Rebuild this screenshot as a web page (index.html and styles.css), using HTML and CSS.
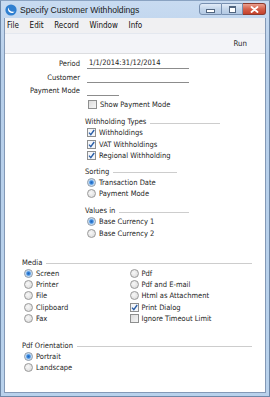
FILE: index.html
```html
<!DOCTYPE html>
<html lang="en">
<head>
  <meta charset="UTF-8">
  <title>Specify Customer Withholdings</title>
  <link rel="stylesheet" href="styles.css">
</head>
<body>
  <div class="window">
    <div class="titlebar">
      <svg class="app-icon" width="12" height="12" viewBox="0 0 12 12">
        <circle cx="6" cy="6" r="5.6" fill="#2f7fd0"/>
        <path d="M3.2 3.4 C2.4 5.6 3.6 8.6 6.6 8.9 C8.2 9 9.2 8.2 9.6 7.4 C8.4 8 6.2 7.9 5 6.6 C4 5.5 3.6 4.4 3.2 3.4 Z" fill="#ffffff"/>
      </svg>
      <span class="title">Specify Customer Withholdings</span>
      <div class="controls">
        <span class="ctl min"><i></i></span>
        <span class="ctl max"><i></i></span>
        <span class="ctl close">
          <svg width="9" height="7" viewBox="0 0 9 7"><path d="M1.5 1 L7.5 6 M7.5 1 L1.5 6" stroke="#ffffff" stroke-width="1.8" stroke-linecap="round"/></svg>
        </span>
      </div>
    </div>

    <div class="client">
      <div class="menubar">
        <span>File</span>
        <span>Edit</span>
        <span>Record</span>
        <span>Window</span>
        <span>Info</span>
      </div>
      <div class="toolbar">
        <span class="run">Run</span>
      </div>

      <div class="content">
        <div class="form">
          <div class="row">
            <label>Period</label>
            <span class="field wide">1/1/2014:31/12/2014</span>
          </div>
          <div class="row">
            <label>Customer</label>
            <span class="field wide"></span>
          </div>
          <div class="row">
            <label>Payment Mode</label>
            <span class="field short"></span>
          </div>
          <div class="opt single"><span class="box"></span>Show Payment Mode</div>
        </div>

        <div class="group withholding">
          <div class="heading">Withholding Types</div>
          <div class="opt"><span class="box checked"></span>Withholdings</div>
          <div class="opt"><span class="box checked"></span>VAT Withholdings</div>
          <div class="opt"><span class="box checked"></span>Regional Withholding</div>
        </div>

        <div class="group sorting">
          <div class="heading">Sorting</div>
          <div class="opt"><span class="radio on"></span>Transaction Date</div>
          <div class="opt"><span class="radio"></span>Payment Mode</div>
        </div>

        <div class="group values">
          <div class="heading">Values in</div>
          <div class="opt"><span class="radio on"></span>Base Currency 1</div>
          <div class="opt"><span class="radio"></span>Base Currency 2</div>
        </div>

        <div class="group media">
          <div class="heading">Media</div>
          <div class="cols">
            <div class="col">
              <div class="opt"><span class="radio on"></span>Screen</div>
              <div class="opt"><span class="radio"></span>Printer</div>
              <div class="opt"><span class="radio"></span>File</div>
              <div class="opt"><span class="radio"></span>Clipboard</div>
              <div class="opt"><span class="radio"></span>Fax</div>
            </div>
            <div class="col">
              <div class="opt"><span class="radio"></span>Pdf</div>
              <div class="opt"><span class="radio"></span>Pdf and E-mail</div>
              <div class="opt"><span class="radio"></span>Html as Attachment</div>
              <div class="opt"><span class="box checked"></span>Print Dialog</div>
              <div class="opt"><span class="box"></span>Ignore Timeout Limit</div>
            </div>
          </div>
        </div>

        <div class="group orientation">
          <div class="heading">Pdf Orientation</div>
          <div class="opt"><span class="radio on"></span>Portrait</div>
          <div class="opt"><span class="radio"></span>Landscape</div>
        </div>
      </div>
    </div>
  </div>
</body>
</html>
```

FILE: styles.css
```css
body {
  margin: 0;
  padding: 0;
  font-family: "DejaVu Sans Condensed", "Liberation Sans", sans-serif;
  font-size: 7.5px;
  color: #1e1e1e;
}

.window {
  width: 270px;
  height: 397px;
  box-sizing: border-box;
  display: flex;
  flex-direction: column;
  padding: 0 3px 3px;
  background: linear-gradient(#c8dbf1, #b7cfea 60px, #b9d2ec);
  border: 1px solid #6e88a8;
  border-top-color: #8aa3c2;
}

/* title bar */
.titlebar {
  height: 17px;
  display: flex;
  align-items: center;
  flex-shrink: 0;
}

.app-icon {
  margin-left: 1px;
  margin-right: 3px;
}

.title {
  font-family: "Liberation Sans", sans-serif;
  font-size: 8.6px;
  color: #1a1a1a;
}

.controls {
  margin-left: auto;
  display: flex;
  align-self: flex-start;
  margin-top: 2px;
}

.ctl {
  height: 12px;
  box-sizing: border-box;
  border: 1px solid #7890b0;
  display: flex;
  align-items: center;
  justify-content: center;
  background: linear-gradient(#e2ecf8, #c3d5ea 50%, #b3c9e3);
}

.ctl.min {
  width: 23px;
  border-radius: 3px 0 0 3px;
}

.ctl.min i {
  width: 7px;
  height: 2px;
  margin-top: 3px;
  background: #ffffff;
  border: 1px solid #51657f;
}

.ctl.max {
  width: 21px;
  border-left: none;
}

.ctl.max i {
  width: 5px;
  height: 4px;
  border: 1px solid #51657f;
  border-top-width: 2px;
  background: #ffffff;
}

.ctl.close {
  width: 23px;
  border-left: none;
  border-color: #8b3a2e;
  border-radius: 0 3px 3px 0;
  background: linear-gradient(#eba08f, #d5604a 50%, #c4412c);
}

/* client area */
.client {
  flex: 1;
  display: flex;
  flex-direction: column;
  background: #ffffff;
  border: 1px solid #8499b6;
  border-top: none;
}

.menubar {
  height: 15px;
  display: flex;
  align-items: center;
  gap: 10.6px;
  padding-left: 2px;
  background: #f0f0f2;
  font-size: 8px;
  color: #111111;
}

.toolbar {
  display: flex;
  align-items: center;
  justify-content: flex-end;
  padding-right: 18px;
  background: #f3f4f8;
  border-top: 1px solid #e4e8ef;
  border-bottom: 1px solid #dcdde0;
  box-sizing: border-box;
  height: 21px;
}

.run {
  font-size: 7.8px;
  margin-top: -1px;
}

/* form */
.content {
  padding-top: 3px;
}

.row {
  height: 13.6px;
  display: flex;
  align-items: center;
}

.row label {
  width: 75px;
  text-align: right;
  margin-right: 7px;
}

.field {
  height: 10px;
  line-height: 10px;
  border-bottom: 1px solid #8c8c8c;
  padding-left: 2px;
  box-sizing: content-box;
  color: #222222;
}

.field.wide {
  width: 100px;
}

.field.short {
  width: 30px;
}

.opt {
  height: 11.3px;
  display: flex;
  align-items: center;
  padding-left: 2px;
  white-space: nowrap;
}

.opt.single {
  margin-left: 81px;
  margin-top: 1px;
}

.box,
.radio {
  width: 9px;
  height: 9px;
  box-sizing: border-box;
  margin-right: 3px;
  flex-shrink: 0;
}

.box {
  border: 1px solid #8e8f8f;
  background: linear-gradient(135deg, #dcdcdc, #f6f6f6);
}

.box.checked {
  background: #f4f6f9 url("data:image/svg+xml;utf8,<svg xmlns='http://www.w3.org/2000/svg' width='7' height='7' viewBox='0 0 7 7'><path d='M1 3.6 L2.8 5.6 L6.2 1' fill='none' stroke='%232b5fa8' stroke-width='1.4'/></svg>") center / 7px 7px no-repeat;
}

.radio {
  border-radius: 50%;
  border: 1px solid #9a9a9a;
  background: radial-gradient(circle at 40% 40%, #f8f8f8, #d6d6d6);
}

.radio.on {
  border-color: #8a98a8;
  background: radial-gradient(circle, #1f63b8 0, #3c8ae0 1.6px, #a9cdf0 2.6px, #e8eef5 3.6px);
}

/* groups */
.group {
  margin-left: 80px;
}

.heading {
  height: 11px;
  display: flex;
  align-items: center;
}

.heading::after {
  content: "";
  flex: 1;
  height: 0;
  margin-left: 4px;
  margin-top: 3px;
  border-top: 1px solid #cdcdcd;
}

.withholding {
  width: 135px;
  margin-top: 6px;
}

.sorting {
  width: 92px;
  margin-top: 5px;
}

.values {
  width: 104px;
  margin-top: 5.5px;
}

.media {
  margin-left: 17px;
  width: 230px;
  margin-top: 18px;
}

.cols {
  display: flex;
}

.col {
  width: 105.5px;
}

.orientation {
  margin-left: 17px;
  width: 230px;
  margin-top: 15.5px;
}
```
